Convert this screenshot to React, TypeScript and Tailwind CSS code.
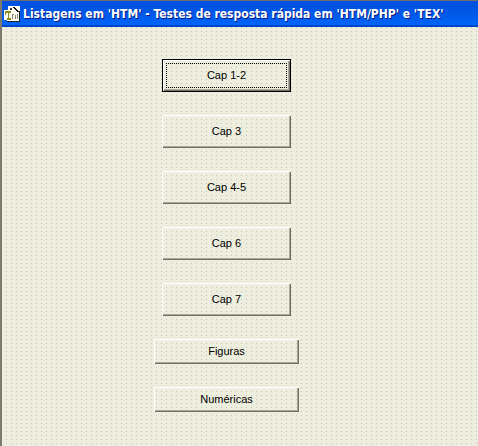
import { useState } from "react";

type Opcao = {
  id: string;
  texto: string;
  largo?: boolean;
};

const OPCOES: Opcao[] = [
  { id: "cap12", texto: "Cap 1-2" },
  { id: "cap3", texto: "Cap 3" },
  { id: "cap45", texto: "Cap 4-5" },
  { id: "cap6", texto: "Cap 6" },
  { id: "cap7", texto: "Cap 7" },
  { id: "figuras", texto: "Figuras", largo: true },
  { id: "numericas", texto: "Numéricas", largo: true },
];

function IconeJanela() {
  return (
    <svg width="16" height="16" viewBox="0 0 16 16" shapeRendering="crispEdges" aria-hidden="true" className="shrink-0">
      <path d="M4 0h12v15H3v-1H0V4h4z" fill="#fffff4" />
      <path d="M9 1h2v1h1v1h1v1h1v1h1v1h-2V5h-1V4h-1V3h-1V2H9z" fill="#111" />
      <path d="M15 5h1v11H3v-1h12z" fill="#222" />
      <path d="M6 2h2v2H6z" fill="#333" />
      <path d="M1 5h6v2H5v5h2v2H3v-2h1V7H2v2H1z" fill="#8c8c1c" />
      <path d="M8 8h1v5H8zM9 8h1v1H9zM11 9h1v4h-1zM13 8h1v5h-1z" fill="#8c8c70" />
    </svg>
  );
}

// Botão em relevo: luz em cima e à esquerda, sombra dupla embaixo e à direita.
function Botao({ opcao, ativo, onClick }: { opcao: Opcao; ativo: boolean; onClick: () => void }) {
  return (
    <button
      type="button"
      onClick={onClick}
      className={`px-[3px] font-['Liberation_Sans',Arial,sans-serif] text-[11px] leading-4 text-black outline-none ${opcao.largo ? "h-[25px] w-[145px]" : "h-[33px] w-[129px]"} ${
        ativo
          ? "border border-black py-[3px] shadow-[inset_1px_1px_0_#fff,inset_-1px_-1px_0_#77756a,inset_-2px_-2px_0_#aca899]"
          : "pt-[2px] pb-1 shadow-[inset_1px_1px_0_#fff,inset_-1px_-1px_0_#716f64,inset_-2px_-2px_0_#aca899]"
      }`}
    >
      <span className={`flex h-full items-center justify-center ${ativo ? "border border-dotted border-black pb-px" : ""}`}>
        {opcao.texto}
      </span>
    </button>
  );
}

export default function App() {
  const [ativo, setAtivo] = useState("cap12");

  return (
    <div className="flex min-h-screen flex-col border-t border-l-2 border-t-[#6b6d70] border-l-[#7d7b70] bg-[#edeedd]">
      <header className="flex h-[26px] items-center gap-[3px] overflow-hidden bg-linear-to-b from-[#0050dc] via-[#0058e8] to-[#0068fc] px-[2px] pb-px shadow-[inset_0_-2px_0_#0048c8]">
        <IconeJanela />
        <h1 className="font-['DejaVu_Sans_Condensed','Trebuchet_MS',sans-serif] text-[12px] leading-5 font-bold whitespace-nowrap text-white [text-shadow:1px_1px_0_#0a1a80]">
          Listagens em 'HTM' - Testes de resposta rápida em 'HTM/PHP' e 'TEX'
        </h1>
      </header>

      <main className="grow bg-[conic-gradient(from_270deg_at_1px_1px,#c2c2b8_90deg,transparent_0)] bg-size-[5px_4px] bg-position-[4px_0px] pt-8 pb-8 pl-[152px]">
        <div className="flex w-[145px] flex-col items-center gap-[23px]">
          {OPCOES.map((o) => (
            <Botao key={o.id} opcao={o} ativo={ativo === o.id} onClick={() => setAtivo(o.id)} />
          ))}
        </div>
      </main>
    </div>
  );
}
